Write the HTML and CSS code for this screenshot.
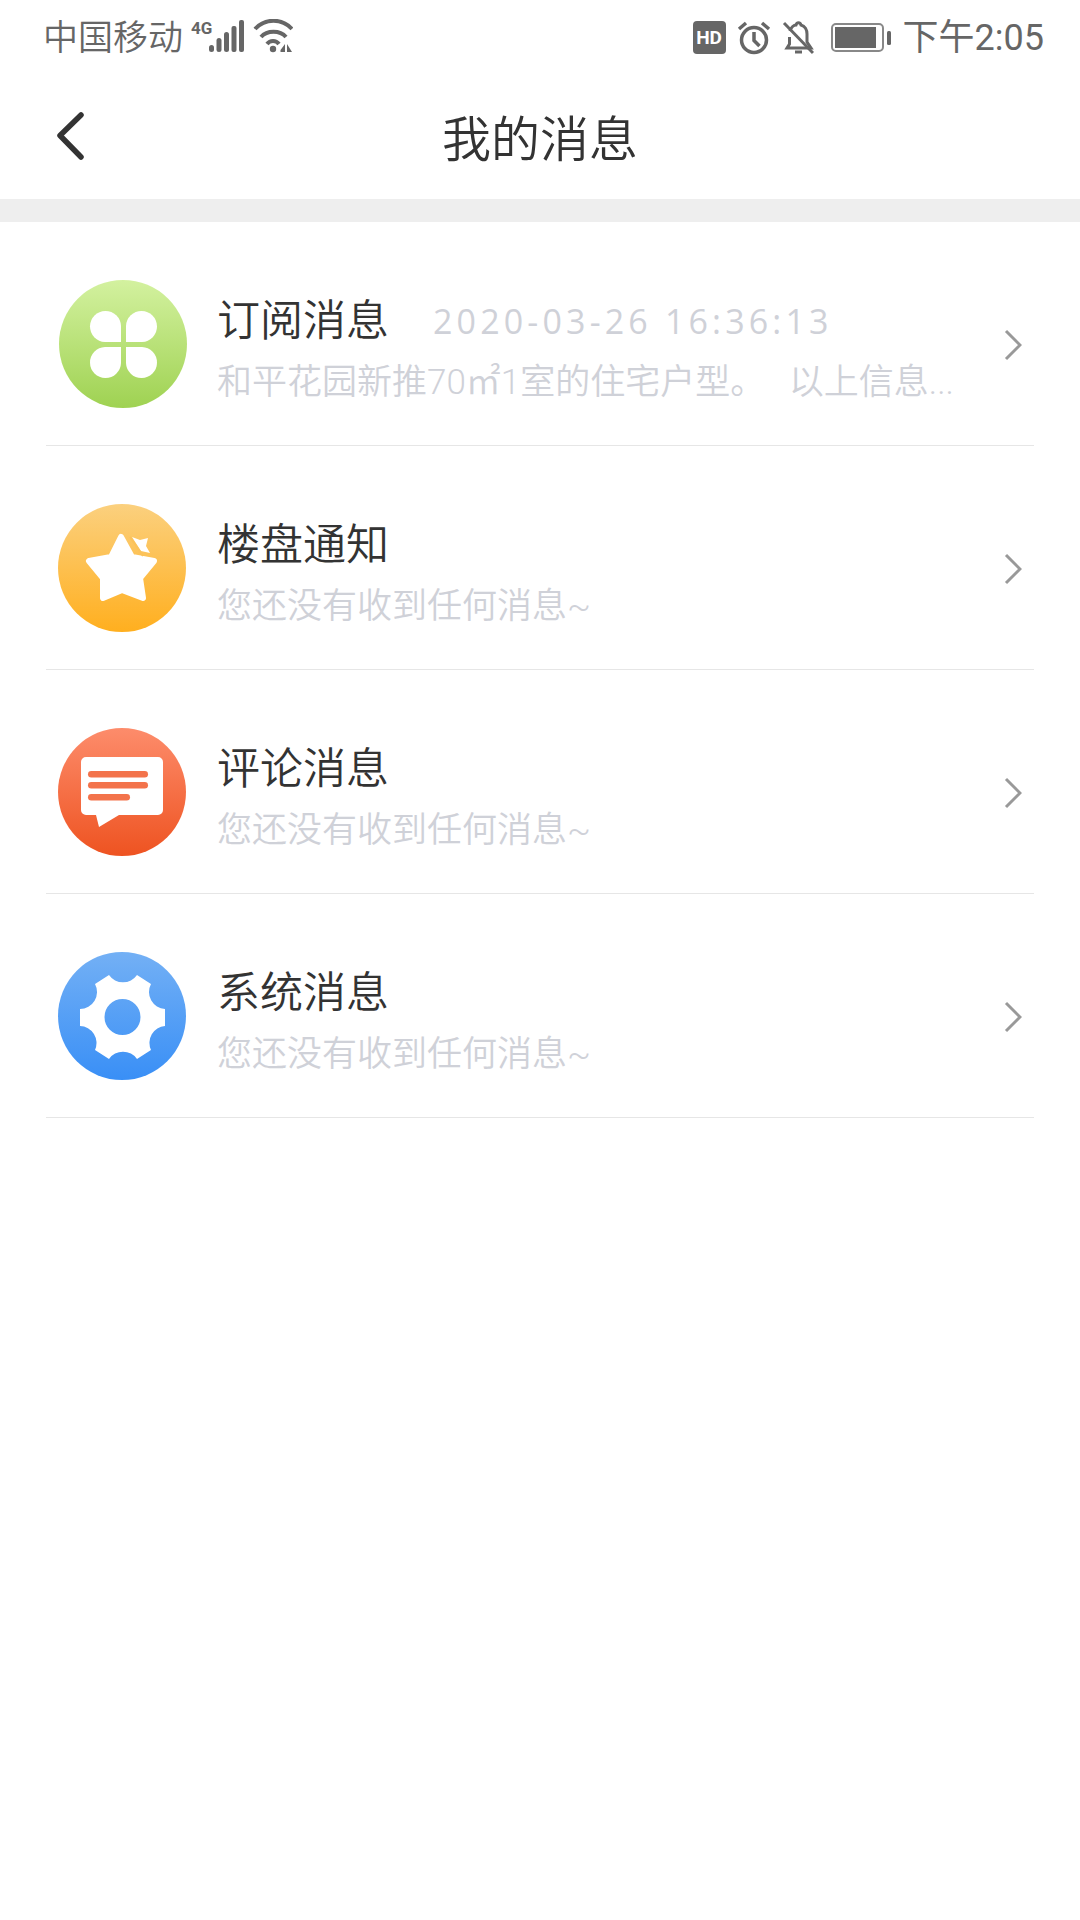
FILE: index.html
```html
<!doctype html>
<html lang="zh-CN">
  <head>
    <meta charset="UTF-8" />
    <meta name="viewport" content="width=device-width, initial-scale=1.0" />
    <title>我的消息</title>
    <link rel="stylesheet" href="styles.css">
  </head>
  <body>
    <div class="status-bar">
      <div class="status-left">
        <span class="carrier">中国移动</span>
        <span class="net-type">4G</span>
        <svg class="signal" width="35" height="32" viewBox="0 0 35 32">
          <rect x="0" y="25" width="5" height="7" rx="2.5" />
          <rect x="7.5" y="18" width="5" height="14" rx="2.5" />
          <rect x="15" y="12" width="5" height="20" rx="2.5" />
          <rect x="22.5" y="6" width="5" height="26" rx="2" />
          <rect x="30" y="0" width="5" height="32" rx="2" />
        </svg>
        <svg class="wifi" width="40" height="34" viewBox="0 0 40 34">
          <path d="M2 10 C12 -1 29 -1 39 10" />
          <path d="M8 18 C14 11 27 11 33 18" />
          <path d="M14 25 C17 21 23 21 26 25" />
          <circle cx="20" cy="30" r="3.200" class="fill" />
          <path class="fill" d="M32 25 V33 H27.500 V31 Z M34 25 V33 H39 Z" />
        </svg>
      </div>
      <div class="status-right">
        <span class="hd">HD</span>
        <svg class="alarm" width="34" height="34" viewBox="0 0 34 34">
          <circle cx="17" cy="19" r="12.500" />
          <path d="M17 11 V19.500 L22.500 25" />
          <path d="M2 8 L9 2 M25 2 L32 8" />
        </svg>
        <svg class="bell" width="32" height="34" viewBox="0 0 32 34">
          <path d="M8 10 C9 6 12 4 14 4 C15 1 18 1 19 4 C23 5 25 9 25 13 V21 L29 27 H5 L7.500 23 V16" />
          <path d="M13 31 H20" />
          <path d="M2 2 L31 32" />
        </svg>
        <svg class="battery" width="61" height="29" viewBox="0 0 61 29">
          <rect x="1" y="1" width="51" height="27" rx="4" class="shell" />
          <rect x="4" y="4" width="41" height="21" class="fill" />
          <rect x="56" y="8" width="4" height="14" rx="1.500" class="fill" />
        </svg>
        <span class="clock">下午2:05</span>
      </div>
    </div>

    <div class="page-header">
      <a class="back" href="#">
        <svg width="34" height="56" viewBox="0 0 34 56">
          <path d="M28 5 L7 25.500 L28 47" />
        </svg>
      </a>
      <h1>我的消息</h1>
    </div>

    <ul class="message-list">
      <li class="message-row">
        <svg class="row-icon icon-green" width="128" height="128" viewBox="0 0 128 128">
          <defs>
            <linearGradient id="grad-green" x1="0" y1="0" x2="0" y2="1">
              <stop offset="0" stop-color="#d3f19f" />
              <stop offset="1" stop-color="#9fd252" />
            </linearGradient>
          </defs>
          <circle cx="64" cy="64" r="64" fill="url(#grad-green)" />
          <g fill="#fff">
            <path d="M62 62 H46 A15.500 15.500 0 1 1 62 46 Z" />
            <path d="M67 62 H83 A15.500 15.500 0 1 0 67 46 Z" />
            <path d="M62 67 H46 A15.500 15.500 0 1 0 62 83 Z" />
            <path d="M67 67 H83 A15.500 15.500 0 1 1 67 83 Z" />
          </g>
        </svg>
        <div class="row-text">
          <div class="row-top">
            <span class="row-title">订阅消息</span>
            <span class="row-date">2020-03-26 16:36:13</span>
          </div>
          <div class="row-sub">和平花园新推70㎡1室的住宅户型。 以上信息...</div>
        </div>
        <svg class="row-arrow" width="18" height="32" viewBox="0 0 18 32"><path d="M2 2 L16 16 L2 30" /></svg>
      </li>

      <li class="message-row">
        <svg class="row-icon" width="128" height="128" viewBox="0 0 128 128">
          <defs>
            <linearGradient id="grad-orange" x1="0" y1="0" x2="0" y2="1">
              <stop offset="0" stop-color="#fbd07e" />
              <stop offset="1" stop-color="#ffaf1f" />
            </linearGradient>
          </defs>
          <circle cx="64" cy="64" r="64" fill="url(#grad-orange)" />
          <path fill="#fff" stroke="#fff" stroke-width="6" stroke-linejoin="round" d="M63 33 L74 53 L96 57 L82 74 L85 94 L64 86 L45 94 L45 74 L31 57 L53 53 Z" />
          <path fill="#fff" d="M74 33 L82 36 L90 34 L88 42 L92 49 L83 47 Z" />
          <path stroke="#fbc25a" stroke-width="2" d="M72 33 L85 52" />
        </svg>
        <div class="row-text">
          <div class="row-top"><span class="row-title">楼盘通知</span></div>
          <div class="row-sub">您还没有收到任何消息~</div>
        </div>
        <svg class="row-arrow" width="18" height="32" viewBox="0 0 18 32"><path d="M2 2 L16 16 L2 30" /></svg>
      </li>

      <li class="message-row">
        <svg class="row-icon" width="128" height="128" viewBox="0 0 128 128">
          <defs>
            <linearGradient id="grad-red" x1="0" y1="0" x2="0" y2="1">
              <stop offset="0" stop-color="#fd8c6b" />
              <stop offset="1" stop-color="#ee5321" />
            </linearGradient>
          </defs>
          <circle cx="64" cy="64" r="64" fill="url(#grad-red)" />
          <path fill="#fff" d="M28 29 H100 A5 5 0 0 1 105 34 V82 A5 5 0 0 1 100 87 H61 L41 99 L38 87 H28 A5 5 0 0 1 23 82 V34 A5 5 0 0 1 28 29 Z" />
          <g fill="#f3734b">
            <rect x="30" y="43" width="60" height="6.500" rx="3.250" />
            <rect x="30" y="54" width="60" height="6.500" rx="3.250" />
            <rect x="30" y="66" width="42" height="6.500" rx="3.250" />
          </g>
        </svg>
        <div class="row-text">
          <div class="row-top"><span class="row-title">评论消息</span></div>
          <div class="row-sub">您还没有收到任何消息~</div>
        </div>
        <svg class="row-arrow" width="18" height="32" viewBox="0 0 18 32"><path d="M2 2 L16 16 L2 30" /></svg>
      </li>

      <li class="message-row">
        <svg class="row-icon" width="128" height="128" viewBox="0 0 128 128">
          <defs>
            <linearGradient id="grad-blue" x1="0" y1="0" x2="0" y2="1">
              <stop offset="0" stop-color="#73b0f5" />
              <stop offset="1" stop-color="#398ff6" />
            </linearGradient>
          </defs>
          <circle cx="64" cy="64" r="64" fill="url(#grad-blue)" />
          <path fill="#fff" fill-rule="evenodd" d="M51 23 A17 17 0 0 0 79 23 L93 32 A17 17 0 0 0 107 57 V74 A17 17 0 0 0 93 98 L79 107 A17 17 0 0 0 51 107 L37 98 A17 17 0 0 0 22 74 V57 A17 17 0 0 0 37 32 Z M64.500 47 A18 18 0 1 0 64.500 83 A18 18 0 1 0 64.500 47 Z" />
        </svg>
        <div class="row-text">
          <div class="row-top"><span class="row-title">系统消息</span></div>
          <div class="row-sub">您还没有收到任何消息~</div>
        </div>
        <svg class="row-arrow" width="18" height="32" viewBox="0 0 18 32"><path d="M2 2 L16 16 L2 30" /></svg>
      </li>
    </ul>
  </body>
</html>
```

FILE: styles.css
```css
* {
  margin: 0;
  padding: 0;
  box-sizing: border-box;
}

body {
  min-height: 100vh;
  background: #fff;
  font-family: Roboto, "Noto Sans CJK SC", sans-serif;
  font-weight: 350;
}

.status-bar {
  height: 75px;
  padding: 0 36px 0 43px;
  display: flex;
  align-items: center;
  justify-content: space-between;
  color: #666;
}

.status-left,
.status-right {
  display: flex;
  align-items: center;
}

.carrier {
  font-size: 35px;
  line-height: 40px;
  margin-top: 2px;
}

.net-type {
  font-size: 17px;
  font-weight: 700;
  line-height: 14px;
  width: 18px;
  margin: -20px 0 0 8px;
}

.signal {
  fill: #666;
  margin-top: -3px;
}

.wifi {
  margin: -3px 0 0 9px;
  fill: none;
  stroke: #666;
  stroke-width: 4;
}

.wifi .fill {
  fill: #666;
  stroke: none;
}

.hd {
  width: 33px;
  height: 33px;
  border-radius: 4px;
  background: #666;
  color: #fff;
  font-size: 19px;
  font-weight: 700;
  line-height: 33px;
  text-align: center;
}

.alarm,
.bell {
  fill: none;
  stroke: #666;
  stroke-width: 3.500;
}

.alarm {
  margin-left: 11px;
}

.bell {
  margin-left: 11px;
  stroke-width: 3;
}

.battery {
  margin-left: 17px;
}

.battery .shell {
  fill: none;
  stroke: #888;
  stroke-width: 2;
}

.battery .fill {
  fill: #666;
}

.clock {
  margin-left: 11px;
  font-size: 36px;
  font-weight: 400;
  line-height: 40px;
}

.page-header {
  height: 124px;
  position: relative;
  display: flex;
  align-items: center;
  justify-content: center;
  border-bottom: 23px solid #eeeeee;
  box-sizing: content-box;
}

.page-header h1 {
  font-size: 49px;
  font-weight: 350;
  color: #333;
  margin-top: -4px;
}

.back {
  position: absolute;
  left: 53px;
  top: 35px;
  display: block;
  line-height: 0;
}

.back svg {
  fill: none;
  stroke: #333;
  stroke-width: 5.500;
  stroke-linecap: round;
  stroke-linejoin: round;
}

.message-list {
  list-style: none;
  padding: 0 46px;
}

.message-row {
  height: 224px;
  padding: 21px 12px 0 12px;
  display: flex;
  align-items: center;
  border-bottom: 1px solid #e6e6e6;
}

.row-icon {
  flex-shrink: 0;
}

.icon-green {
  margin: 0 -1px 0 1px;
}

.row-text {
  flex: 1;
  margin-left: 31px;
  padding-top: 13px;
}

.row-top {
  display: flex;
  align-items: center;
  height: 65px;
}

.row-title {
  font-size: 43px;
  color: #333;
  margin-bottom: 8px;
}

.row-date {
  margin-left: 44px;
  font-family: "Open Sans", sans-serif;
  font-size: 34px;
  font-weight: 400;
  letter-spacing: 4.150px;
  color: #cfd1d8;
}

.row-sub {
  font-size: 35px;
  line-height: 60px;
  word-spacing: 15px;
  color: #cfd1d8;
  white-space: nowrap;
}

.row-arrow {
  flex-shrink: 0;
  margin-top: 2px;
  fill: none;
  stroke: #999;
  stroke-width: 3;
}
```
